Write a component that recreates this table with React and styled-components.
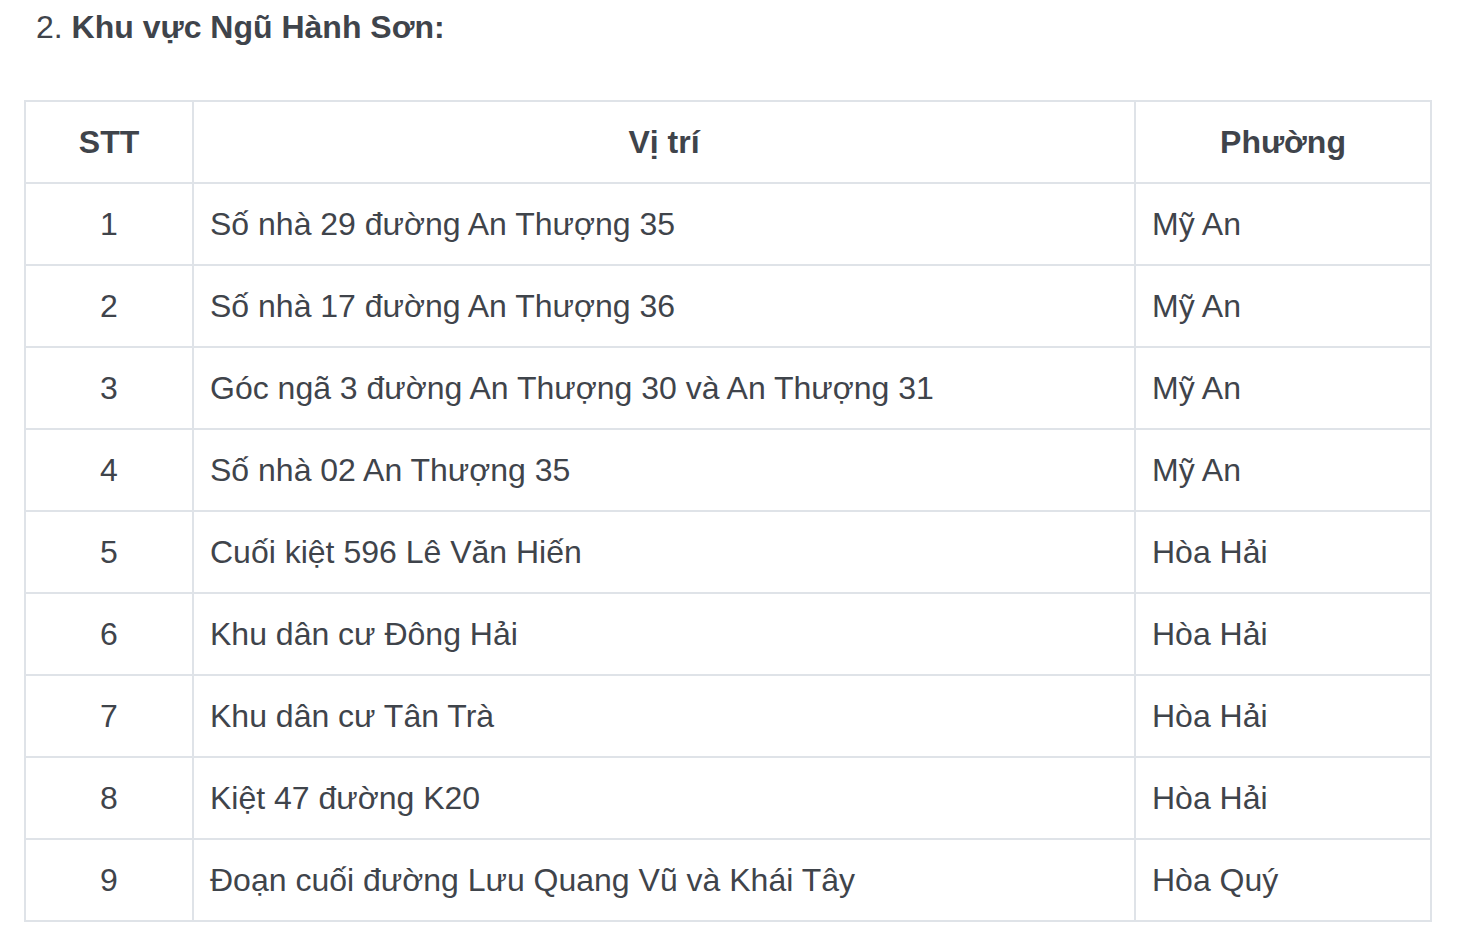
import React from "react";
import styled, { createGlobalStyle } from "styled-components";

const Global = createGlobalStyle`
  html, body { margin: 0; padding: 0; background: #ffffff; }
  body { font-family: "Liberation Sans", Arial, sans-serif; color: #3f444b; }
`;

const Page = styled.div`
  padding: 3px 34px 0 24px;
`;

const Heading = styled.p`
  margin: 0 0 49px 0;
  padding-left: 12px;
  font-size: 32px;
  line-height: 48px;
  color: #3f444b;
`;

const Strong = styled.strong`
  font-weight: 700;
`;

const Table = styled.table`
  border-collapse: collapse;
  table-layout: fixed;
  width: 1406px;
  font-size: 32px;
  line-height: 48px;
  color: #3f444b;
`;

const Cell = styled.td`
  border: 2px solid #dfe3e8;
  padding: 16px 16px;
  text-align: ${(p) => (p.$center ? "center" : "left")};
  font-weight: ${(p) => (p.$head ? 700 : 400)};
  white-space: nowrap;
`;

const rows = [
  ["1", "Số nhà 29 đường An Thượng 35", "Mỹ An"],
  ["2", "Số nhà 17 đường An Thượng 36", "Mỹ An"],
  ["3", "Góc ngã 3 đường An Thượng 30 và An Thượng 31", "Mỹ An"],
  ["4", "Số nhà 02 An Thượng 35", "Mỹ An"],
  ["5", "Cuối kiệt 596 Lê Văn Hiến", "Hòa Hải"],
  ["6", "Khu dân cư Đông Hải", "Hòa Hải"],
  ["7", "Khu dân cư Tân Trà", "Hòa Hải"],
  ["8", "Kiệt 47 đường K20", "Hòa Hải"],
  ["9", "Đoạn cuối đường Lưu Quang Vũ và Khái Tây", "Hòa Quý"],
];

export default function App() {
  return (
    <>
      <Global />
      <Page>
        <Heading>
          2. <Strong>Khu vực Ngũ Hành Sơn:</Strong>
        </Heading>
        <Table>
          <colgroup>
            <col style={{ width: 168 }} />
            <col style={{ width: 942 }} />
            <col style={{ width: 296 }} />
          </colgroup>
          <thead>
            <tr>
              <Cell as="th" $head $center>STT</Cell>
              <Cell as="th" $head $center>Vị trí</Cell>
              <Cell as="th" $head $center>Phường</Cell>
            </tr>
          </thead>
          <tbody>
            {rows.map((r) => (
              <tr key={r[0]}>
                <Cell $center>{r[0]}</Cell>
                <Cell>{r[1]}</Cell>
                <Cell>{r[2]}</Cell>
              </tr>
            ))}
          </tbody>
        </Table>
      </Page>
    </>
  );
}
